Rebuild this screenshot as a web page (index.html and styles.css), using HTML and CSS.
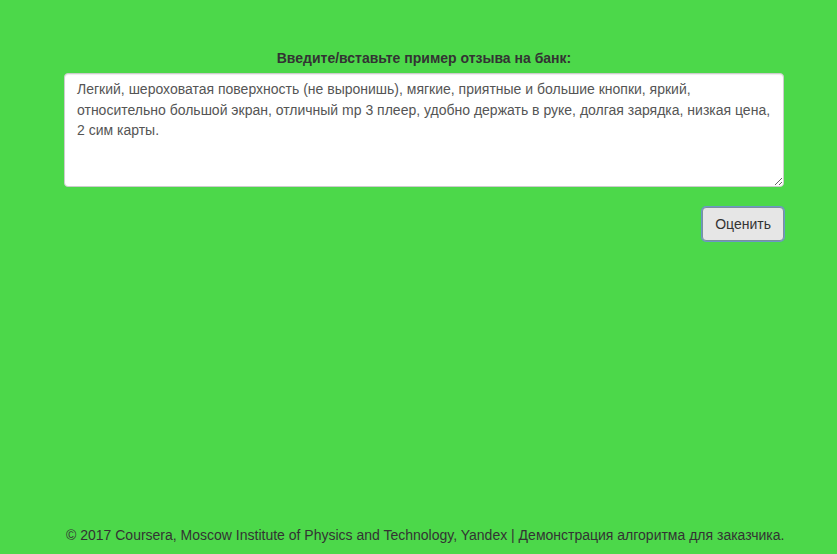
FILE: index.html
```html
<!DOCTYPE html>
<html lang="ru">
<head>
<meta charset="utf-8">
<title>Отзыв</title>
<link rel="stylesheet" href="styles.css">
</head>
<body>
<div class="page">
  <main class="main">
    <form class="form">
      <label class="label" for="review">Введите/вставьте пример отзыва на банк:</label>
      <textarea id="review" class="textarea">Легкий, шероховатая поверхность (не выронишь), мягкие, приятные и большие кнопки, яркий, относительно большой экран, отличный mp 3 плеер, удобно держать в руке, долгая зарядка, низкая цена, 2 сим карты.</textarea>
      <div class="actions">
        <button type="button" class="btn">Оценить</button>
      </div>
    </form>
  </main>
  <footer class="footer">© 2017 Coursera, Moscow Institute of Physics and Technology, Yandex | Демонстрация алгоритма для заказчика.</footer>
</div>
</body>
</html>
```
FILE: styles.css
```css
html, body {
  margin: 0;
  padding: 0;
  height: 100%;
}
body {
  background: #4cd84a;
  font-family: "Liberation Sans", Arial, sans-serif;
  font-size: 14px;
  line-height: 20px;
  color: #333;
}
.page {
  display: flex;
  flex-direction: column;
  height: 554px;
  box-sizing: border-box;
}
.main {
  flex: 1;
  padding: 48px 53px 0 64px;
}
.form {
  width: 720px;
  display: flex;
  flex-direction: column;
}
.label {
  text-align: center;
  font-weight: bold;
  margin-bottom: 5px;
}
.textarea {
  box-sizing: border-box;
  height: 114px;
  width: 720px;
  padding: 5px 12px;
  border: 1px solid #ccc;
  border-radius: 4px;
  background: #fff;
  font-family: "Liberation Sans", Arial, sans-serif;
  font-size: 14px;
  line-height: 20.5px;
  color: #555;
  box-shadow: inset 0 1px 1px rgba(0,0,0,.075);
  resize: vertical;
}
.actions {
  display: flex;
  justify-content: flex-end;
  margin-top: 20px;
}
.btn {
  box-sizing: border-box;
  height: 34px;
  padding: 6px 12px;
  font-family: "Liberation Sans", Arial, sans-serif;
  font-size: 14px;
  line-height: 20px;
  color: #333;
  background: #e6e6e6;
  border: 1px solid #7a8f9e;
  border-radius: 4px;
  box-shadow: 0 0 0 1px #6a9ac4;
}
.footer {
  padding: 0 0 9px 66px;
  line-height: 20px;
  color: #333;
}
```
